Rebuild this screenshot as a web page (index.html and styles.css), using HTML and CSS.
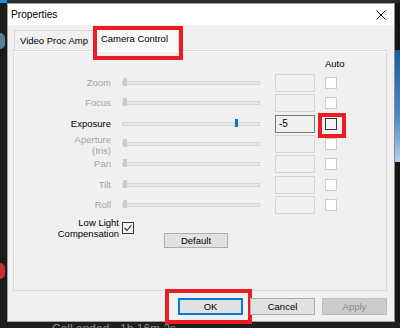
FILE: index.html
```html
<!DOCTYPE html>
<html lang="en">
<head>
  <meta charset="UTF-8" />
  <title>Properties</title>
  <link rel="stylesheet" href="styles.css">
</head>
<body>
  <div class="topstrip"><span class="skype"></span></div>

  <div class="middle">
    <div class="leftstrip">
      <span class="avatar blue"></span>
      <span class="avatar red"></span>
    </div>

    <div class="dialog">
      <div class="titlebar">
        <span>Properties</span>
        <svg class="close" width="10" height="10" viewBox="0 0 10 10">
          <path d="M0.5 0.5 L9.5 9.5 M9.5 0.5 L0.5 9.5" stroke="#000" stroke-width="1" fill="none" />
        </svg>
      </div>

      <div class="content">
        <div class="tabs">
          <div class="tab">Video Proc Amp</div>
          <div class="tab active">Camera Control<span class="mark mark-tab"></span></div>
        </div>

        <div class="panel">
          <div class="grid">
            <div></div><div></div><div></div><div class="auto">Auto</div>

            <div class="label off">Zoom</div>
            <div class="slider"><div class="track"></div><span class="thumb"></span></div>
            <div class="field"></div>
            <div class="check"></div>

            <div class="label off">Focus</div>
            <div class="slider"><div class="track"></div><span class="thumb"></span></div>
            <div class="field"></div>
            <div class="check"></div>

            <div class="label">Exposure</div>
            <div class="slider"><div class="track"></div><span class="thumb live" style="left: 113px"></span></div>
            <div class="field live">-5</div>
            <div class="check live"><span class="mark mark-check"></span></div>

            <div class="label off two">Aperture<br>(Iris)</div>
            <div class="slider"><div class="track"></div><span class="thumb"></span></div>
            <div class="field"></div>
            <div class="check"></div>

            <div class="label off">Pan</div>
            <div class="slider"><div class="track"></div><span class="thumb"></span></div>
            <div class="field"></div>
            <div class="check"></div>

            <div class="label off">Tilt</div>
            <div class="slider"><div class="track"></div><span class="thumb"></span></div>
            <div class="field"></div>
            <div class="check"></div>

            <div class="label off">Roll</div>
            <div class="slider"><div class="track"></div><span class="thumb"></span></div>
            <div class="field"></div>
            <div class="check"></div>
          </div>

          <div class="lowlight">
            <div class="label two">Low Light<br>Compensation</div>
            <div class="check live ticked">
              <svg width="10" height="10" viewBox="0 0 10 10">
                <path d="M1.5 5 L4 7.5 L8.5 2" stroke="#222" stroke-width="1.1" fill="none" />
              </svg>
            </div>
            <button class="btn default-btn">Default</button>
          </div>
        </div>

        <div class="buttons">
          <button class="btn ok">OK<span class="mark mark-ok"></span></button>
          <button class="btn">Cancel</button>
          <button class="btn disabled">Apply</button>
        </div>
      </div>
    </div>

    <div class="rightstrip"><span class="sky"></span></div>
  </div>

  <div class="bottomstrip">Call ended - 1h 16m 2s</div>
</body>
</html>
```

FILE: styles.css
```css
body {
  margin: 0;
  width: 400px;
  height: 328px;
  overflow: hidden;
  background: #1d1d1d;
  font-family: 'Liberation Sans', Arial, sans-serif;
  font-size: 9.5px;
  color: #000;
}

.topstrip {
  height: 3px;
  background: #2b2b2b;
}

.skype {
  display: block;
  width: 7px;
  height: 3px;
  background: #1f8ad6;
}

.middle {
  display: flex;
  height: 319px;
}

.leftstrip {
  width: 7px;
  display: flex;
  flex-direction: column;
  background: #1b1b1b;
}

.avatar {
  display: block;
  width: 5px;
  height: 16px;
  border-radius: 0 8px 8px 0;
}

.avatar.blue {
  margin-top: 30px;
  background: #5a7e9c;
}

.avatar.red {
  margin-top: 214px;
  background: #c9302c;
}

.rightstrip {
  flex: 1;
  background: #151515;
}

.sky {
  display: block;
  margin-top: 47px;
  height: 112px;
  background: linear-gradient(180deg, #1a5c9a, #4b8cc6 60%, #b8cfe2);
}

.dialog {
  width: 388px;
  box-sizing: border-box;
  border: 1px solid #a0a0a0;
  border-right-color: #8c8c8c;
  display: flex;
  flex-direction: column;
  background: #f0f0f0;
}

.titlebar {
  height: 21px;
  background: #fff;
  display: flex;
  align-items: center;
  justify-content: space-between;
  padding: 0 8px 0 3px;
  font-size: 10.2px;
}

.close {
  display: block;
}

.content {
  flex: 1;
  padding: 2px 7px 0 5px;
  display: flex;
  flex-direction: column;
}

.tabs {
  display: flex;
  align-items: flex-end;
  height: 24px;
  margin-bottom: -1px;
  position: relative;
  z-index: 1;
}

.tab {
  height: 20px;
  box-sizing: border-box;
  margin-left: 1px;
  padding: 0 5px;
  border: 1px solid #d9d9d9;
  border-bottom: none;
  background: #f0f0f0;
  display: flex;
  align-items: center;
  position: relative;
  top: -1px;
}

.tab.active {
  height: 25px;
  top: 0;
  margin-left: -1px;
  padding: 0 10px 2px 7px;
  background: #f9f9f9;
  border-color: #d9d9d9;
}

.mark {
  position: absolute;
  border: 4px solid #ec1c24;
  pointer-events: none;
}

.mark-tab {
  left: -1px;
  top: -1px;
  right: -5px;
  bottom: -9px;
}

.panel {
  height: 241px;
  box-sizing: border-box;
  border: 1px solid #d9d9d9;
  background: #f0f0f0;
  box-shadow: inset 1px 1px 0 #fff;
}

.grid {
  display: grid;
  grid-template-columns: 108px 153px 50px 12px;
  grid-template-rows: 23px;
  grid-auto-rows: 20.33px;
}

.auto {
  white-space: nowrap;
  align-self: center;
  margin-top: 1px;
}

.label {
  height: 18px;
  line-height: 18px;
  text-align: right;
  padding-right: 11px;
  white-space: nowrap;
}

.label.off {
  color: #a3a3a3;
}

.label.two {
  line-height: 11px;
  padding-top: 0;
}

.grid .label.two {
  margin-top: -1px;
}

.slider {
  position: relative;
  width: 138px;
  height: 18px;
}

.track {
  position: absolute;
  left: 0;
  right: 0;
  top: 7px;
  height: 4px;
  box-sizing: border-box;
  background: #e7e7e7;
  border: 1px solid #d6d6d6;
}

.thumb {
  position: absolute;
  left: 1px;
  top: 4px;
  width: 4px;
  height: 8px;
  background: #cccccc;
}

.thumb.live {
  width: 3px;
  background: #0078d7;
}

.field {
  width: 40px;
  height: 18px;
  box-sizing: border-box;
  border: 1px solid #d5d5d5;
  background: #f0f0f0;
  padding-left: 3px;
  line-height: 16px;
  font-size: 10px;
}

.field.live {
  border-color: #7a7a7a;
}

.check {
  position: relative;
  width: 12px;
  height: 12px;
  box-sizing: border-box;
  margin-top: 3px;
  border: 1px solid #cccccc;
  background: #fff;
}

.check.live {
  border-color: #333;
  background: #f3f3f3;
}

.mark-check {
  left: -8px;
  top: -6px;
  right: -10px;
  bottom: -9px;
}

.check svg {
  display: block;
}

.lowlight {
  display: flex;
  align-items: flex-start;
  margin-top: 1px;
}

.lowlight .label {
  width: 105px;
  height: 22px;
  box-sizing: border-box;
  padding-right: 0;
}

.lowlight .check {
  margin: 5px 0 0 3px;
}

.btn {
  font-family: inherit;
  font-size: 9.5px;
  color: #000;
  height: 17px;
  padding: 0;
  box-sizing: border-box;
  border: 1px solid #adadad;
  background: #e1e1e1;
  position: relative;
}

.default-btn {
  width: 64px;
  height: 15px;
  margin: 16px 0 0 30px;
}

.buttons {
  display: flex;
  justify-content: flex-end;
  gap: 7px;
  margin-top: 7px;
}

.buttons .btn {
  width: 65px;
}

.btn.ok {
  border: 2px solid #0078d7;
}

.mark-ok {
  left: -15px;
  top: -11px;
  right: -11px;
  bottom: -11px;
}

.btn.disabled {
  background: #cccccc;
  border-color: #bfbfbf;
  color: #8a8a8a;
}

.bottomstrip {
  height: 6px;
  overflow: hidden;
  background: #1f1f1f;
  color: #8a8a8a;
  font-size: 12px;
  line-height: 14px;
  padding-left: 52px;
}
```
